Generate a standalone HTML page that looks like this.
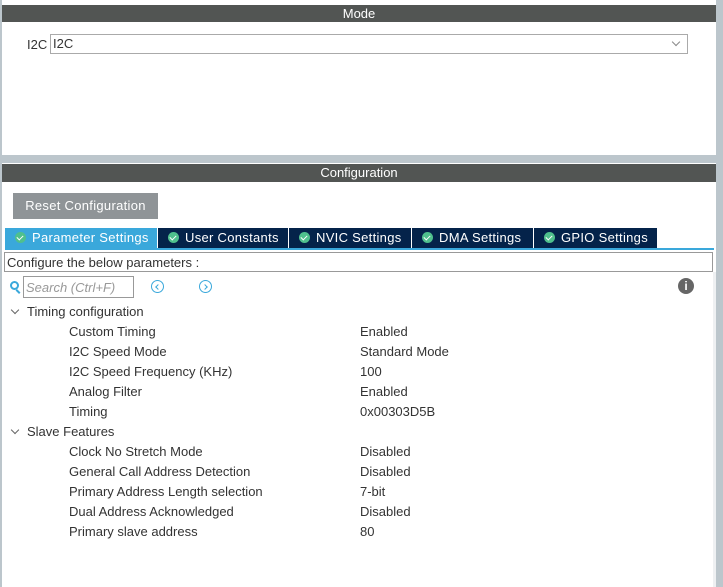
<!DOCTYPE html>
<html><head><style>
*{margin:0;padding:0;box-sizing:border-box}
body{width:723px;height:587px;background:#bcc6cc;font-family:"Liberation Sans",sans-serif;font-size:13px;color:#333;position:relative;overflow:hidden}
.a{position:absolute}
.hdr{background:#525553;color:#fff;text-align:center;font-size:13px;line-height:17px}
.tab{position:absolute;top:228px;height:20px;background:#04234a;color:#fff;font-size:13px;line-height:20px;padding-left:10px;white-space:nowrap;letter-spacing:0.3px}
.tab i{display:inline-block;width:11px;height:11px;border-radius:50%;background:#4fc08d;vertical-align:-1px;margin-right:6px;position:relative}
.tab i:after{content:"";position:absolute;left:3px;top:2px;width:3px;height:5px;border:solid #fff;border-width:0 1.5px 1.5px 0;transform:rotate(45deg)}
.row{position:absolute;height:20px;line-height:20px;white-space:nowrap}
.chev{position:absolute;width:6px;height:6px;border:solid #666;border-width:0 1px 1px 0;transform:rotate(45deg)}
.circ{position:absolute;width:13px;height:13px;border:1.5px solid #3aa8db;border-radius:50%}
</style></head><body>
<div class="a" style="left:2px;top:0;width:714px;height:155px;background:#fff"></div>
<div class="a hdr" style="left:2px;top:5px;width:714px;height:17px">Mode</div>
<div class="a" style="left:27px;top:37px;line-height:16px">I2C</div>
<div class="a" style="left:50px;top:34px;width:638px;height:20px;border:1px solid #aaa;line-height:18px;padding-left:2px">I2C</div>
<div class="chev" style="left:673px;top:39px;border-color:#888"></div>
<div class="a" style="left:2px;top:163px;width:714px;height:424px;background:#fff"></div>
<div class="a hdr" style="left:2px;top:164px;width:714px;height:18px">Configuration</div>
<div class="a" style="left:13px;top:193px;width:145px;height:26px;background:#8f9497;color:#fff;line-height:26px;text-align:center;letter-spacing:0.3px">Reset Configuration</div>
<div class="tab" style="left:5px;width:152px;background:#3aa8db"><i></i>Parameter Settings</div>
<div class="tab" style="left:158px;width:130px"><i></i>User Constants</div>
<div class="tab" style="left:289px;width:122px"><i></i>NVIC Settings</div>
<div class="tab" style="left:412px;width:121px"><i></i>DMA Settings</div>
<div class="tab" style="left:534px;width:123px"><i></i>GPIO Settings</div>
<div class="a" style="left:5px;top:248px;width:709px;height:2px;background:#3aa8db"></div>
<div class="a" style="left:4px;top:252px;width:709px;height:20px;border:1px solid #999;line-height:19px;padding-left:2px">Configure the below parameters :</div>
<div class="a" style="left:713px;top:272px;width:3px;height:315px;background:#eef0f2"></div>
<div class="a" style="left:10px;top:281px;width:9px;height:9px;border:2px solid #3aa8db;border-radius:50%"></div>
<div class="a" style="left:17px;top:289px;width:2px;height:5px;background:#3aa8db;transform:rotate(-45deg)"></div>
<div class="a" style="left:23px;top:276px;width:111px;height:22px;border:1px solid #999;color:#999;font-style:italic;line-height:21px;padding-left:2px">Search (Ctrl+F)</div>
<div class="circ" style="left:151px;top:280px"></div>
<div class="a" style="left:156px;top:284.5px;width:4px;height:4px;border:solid #3aa8db;border-width:0 0 1.2px 1.2px;transform:rotate(45deg)"></div>
<div class="circ" style="left:199px;top:280px"></div>
<div class="a" style="left:203px;top:284.5px;width:4px;height:4px;border:solid #3aa8db;border-width:1.2px 1.2px 0 0;transform:rotate(45deg)"></div>
<div class="a" style="left:678px;top:278px;width:16px;height:16px;border-radius:50%;background:#666;color:#fff;font-weight:bold;font-size:12px;text-align:center;line-height:16px">i</div>
<div class="chev" style="left:12px;top:307px"></div>
<div class="row" style="left:27px;top:302px">Timing configuration</div>
<div class="row" style="left:69px;top:322px">Custom Timing</div><div class="row" style="left:360px;top:322px">Enabled</div>
<div class="row" style="left:69px;top:342px">I2C Speed Mode</div><div class="row" style="left:360px;top:342px">Standard Mode</div>
<div class="row" style="left:69px;top:362px">I2C Speed Frequency (KHz)</div><div class="row" style="left:360px;top:362px">100</div>
<div class="row" style="left:69px;top:382px">Analog Filter</div><div class="row" style="left:360px;top:382px">Enabled</div>
<div class="row" style="left:69px;top:402px">Timing</div><div class="row" style="left:360px;top:402px">0x00303D5B</div>
<div class="chev" style="left:12px;top:427px"></div>
<div class="row" style="left:27px;top:422px">Slave Features</div>
<div class="row" style="left:69px;top:442px">Clock No Stretch Mode</div><div class="row" style="left:360px;top:442px">Disabled</div>
<div class="row" style="left:69px;top:462px">General Call Address Detection</div><div class="row" style="left:360px;top:462px">Disabled</div>
<div class="row" style="left:69px;top:482px">Primary Address Length selection</div><div class="row" style="left:360px;top:482px">7-bit</div>
<div class="row" style="left:69px;top:502px">Dual Address Acknowledged</div><div class="row" style="left:360px;top:502px">Disabled</div>
<div class="row" style="left:69px;top:522px">Primary slave address</div><div class="row" style="left:360px;top:522px">80</div>
</body></html>
